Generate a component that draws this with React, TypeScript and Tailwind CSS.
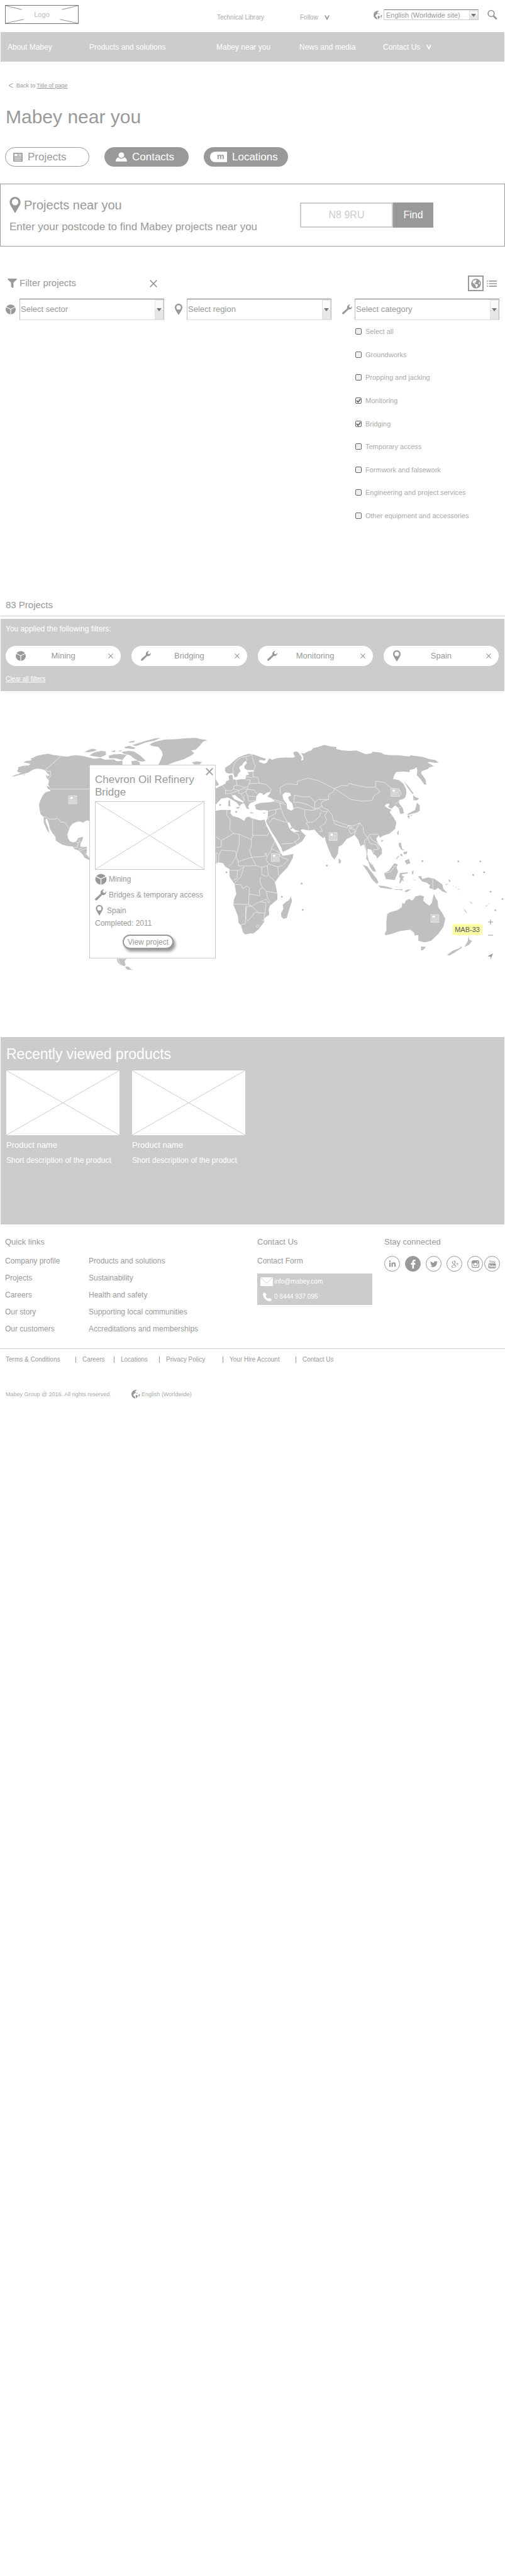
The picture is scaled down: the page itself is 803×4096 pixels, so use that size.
import React from "react";
import { FaFacebookF, FaFilter, FaGlobeAmericas, FaLinkedinIn, FaTwitter } from "react-icons/fa";
import { TiSocialGooglePlus } from "react-icons/ti";

type IconProps = { className?: string };

const Pin = ({ className }: IconProps) => (
  <svg viewBox="0 0 20 30" className={className} fill="currentColor" aria-hidden="true">
    <path fillRule="evenodd" d="M10 0C4.400 0 0 4.300 0 9.800 0 13 1.500 15.600 3.500 19L10 30l6.500-11C18.500 15.600 20 13 20 9.800 20 4.300 15.600 0 10 0Zm0 3.600a6 6 0 1 1 0 12 6 6 0 0 1 0-12Z" />
  </svg>
);

const Sector = ({ className }: IconProps) => (
  <svg viewBox="0 0 24 24" className={className} aria-hidden="true">
    <ellipse cx="12" cy="12" rx="12" ry="11.500" fill="currentColor" />
    <path d="M0 5.500 12 11.500 24 5.500M12 11.500V24" fill="none" stroke="#fff" strokeWidth="1.700" />
  </svg>
);

const Wrench = ({ className }: IconProps) => (
  <svg viewBox="0 0 22 22" className={className} aria-hidden="true">
    <path fill="currentColor" d="M.7 18 11 8.500C10 4 13 0 18 .3L15 3.500l.8 3 3.200.7L21.800 4C22.500 9 18.500 12 14 11L4 21c-1 1-2.500.8-3.300-.1C-.2 20 0 18.700.7 18Z" />
  </svg>
);

const Globe = ({ className }: IconProps) => (
  <svg viewBox="0 0 16 16" className={className} aria-hidden="true">
    <circle cx="8" cy="8" r="7.500" fill="#fff" stroke="#e4e4e4" strokeWidth=".6" />
    <path fill="#999" d="M9.500.3C4.500-.7 0 3 0 8c0 3.400 2.200 6.600 6.200 7.700l.8-1.500-1.200-2L3.500 10l.7-2.500 2.300-1.200 1.500-2L6.600 3 9.500.3ZM8 9.200l2.600.4 1.300 1.700-1.600 2.200-1.500 1.800-1.300-3.300.5-2.800ZM12.500 9l3-1.500c0 2.200-.8 4.300-2.500 5.800l.4-2.500-.9-1.800Z" />
    <path fill="#c4c4c4" d="m8.500 5.500 2-.8 1 1.200-1.600 1.100-1.900-.4.500-1.100Z" />
  </svg>
);

const Cross = ({ className }: IconProps) => (
  <svg viewBox="0 0 12 12" className={className} stroke="currentColor" aria-hidden="true">
    <path d="M.7.7 11.300 11.300M11.300.7.7 11.300" strokeWidth="1.700" fill="none" />
  </svg>
);

const Chevron = ({ className }: IconProps) => (
  <svg viewBox="0 0 8 8" className={className} stroke="currentColor" aria-hidden="true">
    <path d="M.8.5 4 6.500 7.200.5" strokeWidth="1.700" fill="none" />
  </svg>
);

const News = ({ className }: IconProps) => (
  <svg viewBox="0 0 17 16" className={className} aria-hidden="true">
    <rect width="17" height="16" rx=".8" fill="currentColor" />
    <path fill="#fff" d="M2 2h6v4H2zM9.200 2H15v1.300H9.200zM9.200 4.500H15V6H9.200zM2 7.500h13v1.200H2zM2 10.200h13v1.200H2zM2 12.900h13v1.200H2z" />
  </svg>
);

const Person = ({ className }: IconProps) => (
  <svg viewBox="0 0 22 18" className={className} fill="currentColor" aria-hidden="true">
    <circle cx="11" cy="5.500" r="5.500" />
    <path d="M0 18c0-4 1.500-7 5.200-8.500C8 13.500 14 13.500 16.800 9.500 20.500 11 22 14 22 18Z" />
  </svg>
);

const BrandMark = ({ className }: IconProps) => (
  <svg viewBox="0 0 33 20" className={className} aria-hidden="true">
    <path d="M10 0h23v20H10C3.500 20 0 15 0 10S3.500 0 10 0Z" fill="#fff" />
    <text x="20.500" y="14.500" textAnchor="middle" fill="#999" className="text-[16px] font-bold">m</text>
  </svg>
);

const Search = ({ className }: IconProps) => (
  <svg viewBox="0 0 20 20" className={className} fill="none" stroke="#999" aria-hidden="true">
    <circle cx="7.500" cy="7.500" r="6" strokeWidth="2.300" />
    <path d="m11.800 11.800 6.700 7" strokeWidth="3.400" />
  </svg>
);

const ListIcon = ({ className }: IconProps) => (
  <svg viewBox="0 0 19 12" className={className} fill="#999" aria-hidden="true">
    <path d="M0 0h2v2H0zM4 0h15v2H4zM0 5h2v2H0zM4 5h15v2H4zM0 10h2v2H0zM4 10h15v2H4z" />
  </svg>
);

const Camera = ({ className }: IconProps) => (
  <svg viewBox="0 0 14 14" className={className} aria-hidden="true">
    <rect x=".7" y=".7" width="12.600" height="12.600" rx="2" fill="none" stroke="currentColor" strokeWidth="1.400" />
    <path d="M1 1h12v4.500H1z" fill="currentColor" />
    <circle cx="7" cy="7" r="3.200" fill="#fff" stroke="currentColor" strokeWidth="1.300" />
    <path d="M10 2h2v2h-2z" fill="#fff" />
  </svg>
);

const YouTube = ({ className }: IconProps) => (
  <svg viewBox="0 0 16 18" className={className} aria-hidden="true">
    <text x="8" y="7" textAnchor="middle" fill="currentColor" className="text-[7px] font-bold">You</text>
    <rect x=".5" y="8" width="15" height="10" rx="2.500" fill="currentColor" />
    <text x="8" y="15.500" textAnchor="middle" fill="#fff" className="text-[6px] font-bold">Tube</text>
  </svg>
);

const Envelope = ({ className }: IconProps) => (
  <svg viewBox="0 0 24 17" className={className} aria-hidden="true">
    <rect width="24" height="17" rx="1.500" fill="#fff" />
    <path d="m1 1 11 10.500L23 1" fill="none" stroke="#ccc" strokeWidth="1.200" />
  </svg>
);

const Phone = ({ className }: IconProps) => (
  <svg viewBox="0 0 17 17" className={className} aria-hidden="true">
    <path d="M1 1.500 3.500 0 7 4 5 6.800c1 2.200 3 4.200 5.200 5.200L13 10.500l4 3.500c-.5 2-2 3-4 3C6 16 0 9 0 3.500Z" fill="#fff" />
  </svg>
);

const Placeholder = ({ className }: IconProps) => (
  <svg viewBox="0 0 180 103" preserveAspectRatio="none" className={className} aria-hidden="true">
    <path d="M0 0 180 103M180 0 0 103" stroke="#ccc" fill="none" vectorEffect="non-scaling-stroke" />
  </svg>
);

const SelectArrow = ({ className }: IconProps) => (
  <span className={`pointer-events-none absolute flex items-center justify-center border border-[#e0e0e0] bg-linear-to-b from-[#fafafa] from-50% to-[#e6e6e6] to-50% ${className}`}>
    <svg viewBox="0 0 8 5" className="h-[5px] w-2" aria-hidden="true">
      <path d="M0 0h8L4 5Z" fill="#777" />
    </svg>
  </span>
);

const filters = [
  { label: "Select sector", icon: <Sector className="h-4 w-[18px]" />, iconBox: "w-[23px]" },
  { label: "Select region", icon: <Pin className="h-[18px] w-3" />, iconBox: "w-[19px]" },
  { label: "Select category", icon: <Wrench className="size-4" />, iconBox: "w-5" },
];

const categories = [
  ["Select all", false],
  ["Groundworks", false],
  ["Propping and jacking", false],
  ["Monitoring", true],
  ["Bridging", true],
  ["Temporary access", false],
  ["Formwork and falsework", false],
  ["Engineering and project services", false],
  ["Other equipment and accessories", false],
] as const;

const chips = [
  { label: "Mining", icon: <Sector className="h-4 w-[18px]" /> },
  { label: "Bridging", icon: <Wrench className="size-4" /> },
  { label: "Monitoring", icon: <Wrench className="size-4" /> },
  { label: "Spain", icon: <Pin className="h-[18px] w-3" /> },
];

const americas = [
  "M65 302 L85 290 L108 284 L122 274 L110 276 L97 270 L104 258 L103 247 L125 240 L140 237 L165 235 L175 226 L158 222 L133 220 L150 210 L172 208 L182 204 L173 198 L190 190 L212 180 L240 174 L275 169 L300 175 L346 181 L385 186 L405 180 L440 177 L480 183 L510 190 L535 197 L575 193 L600 203 L650 201 L670 212 L700 208 L700 500 L512 552 L495 550 L475 562 L462 557 L445 556 L428 562 L412 570 L398 590 L392 610 L385 630 L390 655 L400 668 L415 675 L435 671 L447 650 L475 643 L472 660 L463 675 L458 698 L480 702 L495 700 L497 722 L493 742 L505 758 L512 765 L512 777 L493 768 L482 762 L474 746 L450 722 L425 713 L415 698 L390 697 L355 688 L318 665 L317 643 L300 622 L285 596 L278 565 L270 542 L260 540 L262 560 L275 590 L283 623 L268 605 L258 580 L250 562 L249 530 L232 515 L227 490 L223 460 L231 435 L245 405 L262 388 L287 382 L288 368 L275 345 L280 325 L270 300 L283 290 L265 275 L260 264 L235 256 L215 254 L198 257 L180 264 L165 275 L140 283 Z",
  "M262 290 L270 293 L275 320 L266 305Z M265 352 L282 358 L291 377 L275 370Z M125 290 L145 286 L140 291Z",
  "M482 160 L510 145 L530 140 L555 146 L540 153 L510 160Z M512 178 L530 165 L550 158 L580 152 L605 155 L605 175 L575 188 L535 183Z M620 180 L650 172 L690 170 L725 175 L710 190 L700 205 L660 195 L625 195Z M635 155 L660 148 L655 160Z M675 152 L697 148 L690 156Z M695 158 L735 152 L765 155 L800 178 L833 208 L815 214 L790 210 L765 195 L745 178 L705 168Z M735 100 L770 93 L765 104 L740 105Z M712 130 L740 124 L775 135 L765 142 L715 137Z M755 120 L800 105 L850 90 L890 80 L918 79 L880 95 L830 105 L780 125Z M750 212 L780 207 L800 220 L798 232 L755 232Z M665 232 L680 220 L697 232Z",
  "M855 115 L885 100 L940 88 L1010 85 L1070 80 L1120 78 L1150 85 L1185 90 L1160 100 L1140 125 L1118 145 L1092 150 L1110 165 L1090 180 L1050 200 L995 217 L955 232 L905 232 L920 200 L930 175 L925 155 L905 130 L870 125Z",
  "M1098 218 L1125 212 L1155 217 L1140 230 L1108 230Z",
  "M667 1340 L723 1340 L712 1355 L718 1376 L710 1383 L688 1375 L672 1360Z M715 1385 L735 1385 L748 1400 L762 1404 L730 1403 L720 1395Z",
];

const americasBorders = [
  "M349 182 L300 225 L262 258 L270 270 L288 268 L290 285 L283 308",
  "M287 371 L512 371",
  "M248 530 L268 530 L278 542 L308 542 L325 538 L338 544 L348 562 L362 558 L375 566 L392 592",
  "M422 704 L440 705 L448 680 L438 676 L458 674 L452 660 M448 716 L470 705 L478 696 M452 725 L475 715 L495 711 M485 742 L497 745",
  "M676 1340 L680 1360 L700 1378",
];

const oldWorld = [
  "M27 368 L45 360 L62 350 L82 340 L86 326 L103 318 L98 298 L110 288 L120 292 L122 315 L140 318 L165 314 L188 314 L192 293 L208 286 L200 274 L234 270 L234 262 L200 262 L183 252 L183 238 L196 222 L192 210 L180 218 L170 234 L155 244 L158 258 L163 268 L150 282 L146 298 L132 304 L123 280 L100 282 L86 277 L79 262 L81 248 L105 232 L125 212 L150 190 L185 175 L208 169 L235 174 L262 185 L297 197 L293 207 L262 204 L262 215 L285 225 L300 222 L315 195 L330 203 L360 193 L400 190 L440 191 L452 186 L442 165 L452 155 L465 157 L480 175 L488 190 L485 208 L496 204 L496 185 L484 165 L500 168 L520 155 L538 150 L548 137 L580 128 L608 118 L640 126 L672 130 L672 142 L700 149 L740 152 L778 150 L828 171 L858 166 L865 157 L910 162 L925 172 L952 177 L1000 177 L1060 185 L1065 178 L1130 187 L1170 200 L1197 204 L1216 220 L1195 221 L1170 215 L1155 218 L1190 240 L1165 247 L1158 256 L1125 268 L1122 280 L1145 315 L1150 345 L1140 345 L1120 315 L1100 292 L1102 262 L1098 245 L1085 256 L1060 262 L1063 274 L1030 270 L990 273 L980 290 L973 312 L1005 320 L1028 340 L1042 370 L1044 395 L1038 418 L1022 430 L1008 432 L1004 450 L1024 478 L1031 508 L1012 514 L1003 480 L985 463 L965 482 L947 473 L955 455 L940 454 L928 467 L945 480 L965 488 L955 503 L973 528 L991 560 L984 598 L955 625 L922 636 L905 648 L896 637 L884 653 L892 680 L914 712 L914 740 L888 768 L884 753 L867 740 L858 718 L838 712 L836 745 L845 785 L862 800 L878 828 L882 845 L864 838 L850 815 L842 785 L830 768 L833 740 L826 710 L818 688 L800 696 L788 660 L768 632 L752 643 L727 656 L702 690 L684 700 L680 740 L662 773 L648 757 L632 718 L615 668 L611 645 L600 650 L580 632 L555 603 L525 607 L490 600 L474 610 L455 605 L435 590 L422 560 L411 562 L420 590 L432 608 L448 617 L475 612 L478 597 L487 614 L509 636 L490 668 L465 686 L420 713 L386 730 L378 702 L355 660 L330 620 L310 580 L298 556 L307 530 L309 495 L290 490 L265 492 L245 487 L238 462 L265 450 L320 445 L345 440 L330 425 L305 413 L315 400 L322 388 L305 390 L284 405 L277 395 L262 392 L246 412 L244 438 L212 452 L203 470 L210 485 L195 482 L176 440 L155 424 L132 404 L116 407 L130 428 L155 440 L183 450 L165 457 L158 470 L140 445 L118 432 L95 418 L60 425 L50 437 L27 463 Z",
  "M27 308 L35 322 L47 343 L40 352 L27 350Z M100 295 L108 290 L112 310 L102 308Z M98 440 L106 430 L108 470 L98 468Z M140 475 L160 472 L152 482 L138 480Z M212 502 L235 506 L218 510Z M280 508 L298 502 L288 511Z",
  "M27 495 L60 489 L112 490 L108 508 L120 524 L155 535 L182 552 L190 534 L205 528 L228 540 L265 550 L290 545 L300 580 L325 630 L350 680 L378 738 L385 752 L410 748 L443 741 L440 765 L412 818 L372 862 L345 905 L352 935 L358 972 L358 1002 L318 1038 L312 1058 L315 1088 L290 1108 L288 1130 L258 1172 L230 1197 L212 1196 L188 1202 L176 1190 L165 1150 L152 1135 L148 1095 L124 1030 L128 1000 L140 970 L130 912 L105 875 L104 850 L103 826 L82 815 L68 793 L45 790 L27 800 Z",
  "M430 985 L436 1010 L420 1062 L408 1108 L390 1112 L379 1100 L378 1078 L390 1055 L387 1030 L405 1015 L420 1005Z",
  "M942 1085 L955 1075 L998 1062 L1020 1045 L1022 1022 L1035 1025 L1040 1008 L1060 998 L1072 1008 L1085 998 L1090 985 L1118 977 L1138 984 L1133 1008 L1150 1025 L1166 1037 L1180 1020 L1185 990 L1191 970 L1199 992 L1210 1010 L1213 1045 L1235 1080 L1251 1112 L1240 1160 L1212 1200 L1175 1238 L1140 1247 L1108 1238 L1107 1205 L1088 1207 L1084 1190 L1065 1174 L1010 1182 L960 1200 L935 1206 L928 1200 L938 1175 L937 1130Z",
  "M1122 1270 L1148 1272 L1135 1288 L1122 1293Z M1375 1210 L1378 1230 L1393 1240 L1375 1262 L1352 1273 L1362 1255 L1370 1240Z M1260 1318 L1290 1295 L1325 1280 L1338 1268 L1338 1278 L1300 1305 L1272 1322Z",
  "M812 803 L835 812 L862 850 L885 880 L896 905 L885 912 L860 885 L842 850Z M895 922 L930 925 L970 938 L965 942 L905 934Z M980 942 L1010 944 L1025 942 L1020 950 L1008 947 L985 947Z M1032 955 L1050 945 L1068 943 L1045 960Z",
  "M925 850 L950 838 L980 795 L998 800 L992 820 L1000 842 L982 890 L935 885Z M1010 850 L1052 846 L1050 853 L1020 858 L1022 868 L1034 870 L1025 880 L1032 900 L1020 890 L1012 910 L1006 905 L1012 880 L1005 872Z M1074 840 L1083 835 L1080 857 L1074 857Z M1080 888 L1095 890 L1088 893Z",
  "M1105 870 L1122 867 L1128 885 L1160 875 L1195 885 L1235 915 L1240 940 L1262 967 L1235 955 L1212 935 L1195 948 L1165 935 L1170 920 L1150 905 L1128 898Z M1250 915 L1270 910 L1280 895 L1265 885 L1275 905 L1255 920Z",
  "M1003 680 L1015 676 L1020 710 L1035 720 L1018 718 L1005 700Z M1010 745 L1020 740 L1025 755 L1012 750Z M1035 780 L1058 770 L1065 795 L1045 800Z M988 770 L1003 750 L1005 755 L992 772Z M1028 730 L1050 728 L1045 740 L1032 745Z",
  "M995 618 L1003 606 L1003 630 L996 632Z M910 662 L922 662 L912 675Z M684 765 L697 780 L693 795 L684 795Z",
  "M1030 325 L1055 355 L1082 395 L1075 398 L1055 368Z M1080 405 L1090 415 L1112 425 L1100 435 L1082 435Z M1100 447 L1115 465 L1115 495 L1100 505 L1068 514 L1050 520 L1052 512 L1090 490Z M1048 523 L1062 522 L1058 542Z M1066 520 L1076 518 L1070 526Z",
  "M1347 1050 L1370 1082 L1355 1070Z M1382 1008 L1388 1020 L1384 1022Z M1390 1015 L1394 1025 L1388 1025Z M1464 1035 L1476 1036 L1468 1042Z M1474 1027 L1488 1024 L1482 1028Z M1290 918 L1297 926 L1292 924Z M1303 926 L1312 935 L1306 932Z M1315 938 L1330 945 L1322 945Z M1325 950 L1342 966 L1332 958Z",
];

const seas = [
  "M385 402 L400 390 L425 392 L432 408 L415 415 L420 435 L437 452 L445 485 L432 494 L410 482 L408 455 L390 428Z",
];

const oldWorldBorders = [
  "M124 290 L122 250 L135 215 L165 190 L190 185 L196 208 M188 184 L205 182 L222 172 L232 215 L241 240 L234 258 M228 270 L230 300 L255 305 L262 336 L300 345 L325 372 L318 390",
  "M190 300 L222 305 L230 300 M208 340 L215 318 L190 318 M208 340 L262 336 M140 318 L143 348 L180 360 L200 358 L208 340 M125 355 L143 348 M125 355 L128 370 L155 378 L175 368 L200 372 L202 358 M64 350 L75 360 L83 370 L82 395 M83 378 L110 380 L128 370 M78 398 L110 395 L155 378 M110 395 L120 408 M155 378 L150 392 L165 398 L190 385 L200 372 M165 398 L175 420 L185 432 M190 385 L200 410 L242 414 M200 372 L235 376 L250 398 M200 410 L205 440 M182 405 L178 440 M205 440 L240 436",
  "M375 400 L372 362 L405 340 L465 345 L465 325 L520 308 L575 322 L660 368 L700 350 L730 352 L740 338 L790 352 L830 360 L880 360 L905 385 L870 410 L862 435 L810 440 L750 430 L715 405 L662 368",
  "M880 360 L880 325 L925 332 L965 366 L1012 378 L1015 400 L1005 415 M985 458 L1010 432 M1002 478 L1022 474",
  "M662 368 L655 388 L630 402 L632 430 L600 440 L590 455 L598 475 L628 490 L650 520 L655 548 L732 578 L765 580 L795 564 L815 590 L815 615 L838 650 L848 630 L885 628 L898 638",
  "M447 450 L448 405 L495 415 L532 415 L558 445 L575 430 L632 430 M452 445 L480 448 L520 460 L555 482 L558 445 M555 482 L580 478 L600 465 M440 480 L470 475 L505 488 L545 492 L580 482 L600 498 L625 500 M505 488 L503 520 L520 560 L512 565 L525 588 L522 604 M520 560 L550 558 L580 530 L590 500 M625 500 L610 520 L620 545 L608 570 L585 585 L598 610 L580 615",
  "M655 548 L665 572 L730 592 L733 575 M735 580 L758 590 L745 595Z M735 600 L750 628 L770 615 L768 600 L738 597 M795 564 L778 600 L768 635 M838 650 L820 665 L832 735 M838 650 L850 680 L885 690 L895 715 L872 715 L865 738 M850 640 L860 660 L890 680 L900 712",
  "M345 440 L370 450 L378 482 L312 495 M370 450 L405 462 M340 430 L395 450 M350 490 L350 510 L312 530 L308 545 M340 538 L400 560 L412 555 M378 482 L390 520 L412 560 M312 565 L330 540 L345 536 M378 685 L440 680 L475 655 L470 630 L440 615 M452 668 L460 688",
  "M90 490 L90 520 L108 545 L105 600 L125 625 L60 665 L27 640 M125 625 L155 628 L220 660 L220 655 L227 640 L227 542 M227 635 L305 635 L315 615 M220 660 L220 700 L210 720 L222 760 L150 785 L138 750 L155 690 L155 628 M60 665 L60 700 L27 705 M27 730 L50 745 L60 720 L135 725 L142 750 L115 800 L100 808 M33 740 L35 798 M47 745 L46 792 M222 760 L290 755 L297 735 L302 760 L330 712 L378 738 M325 712 L345 670 M302 760 L298 775 L315 800 L360 815 L385 808 L418 775 L375 758 L370 740",
  "M150 785 L152 810 L210 810 L245 808 L275 818 L305 808 L315 800 M222 760 L245 808 M275 818 L275 860 L300 870 L310 862 L305 808 M103 835 L155 835 L180 815 M180 815 L165 870 L130 908 M145 835 L145 880 L125 890 M130 915 L165 918 L175 940 L195 925 L210 935 L208 970 L265 980 L262 945 L280 935 L265 900 L270 870 M310 862 L348 900 M360 815 L365 865 M280 935 L300 955 L355 965 M300 955 L305 990 L318 1015 L310 1020 L298 1000 L265 1015 L298 1020 L292 1080 L240 1075 L200 1125 L190 1105 L195 1040 L222 1040 L262 1015 M208 970 L205 1030 L222 1040 M125 1027 L205 1030 M190 1040 L188 1140 L165 1145 M222 1040 L262 1080 M292 1080 L285 1125 L275 1118 M244 1155 L252 1145 L262 1152 L252 1163Z",
  "M1184 885 L1184 948 M927 850 L960 845 L980 812 L995 812 M850 795 L862 802",
];

const islands: [number, number][] = [
  [621, 808], [487, 910], [382, 986], [493, 1061], [88, 846], [139, 501], [54, 461], [1129, 782], [1320, 784], [1437, 784],
  [1457, 846], [1399, 861], [1492, 957], [1555, 999], [1517, 1063], [432, 595],
];

const markers: [number, number][] = [[138.500, 1524], [524.500, 1634], [634.500, 1594], [752.500, 1510], [828.500, 1750]];

function WorldMap() {
  return (
    <svg viewBox="0 1317 962 659" className="block w-full" role="img" aria-label="World map of projects">
      <g transform="translate(0 1380) scale(.3333)">
        <g fill="#c0c0c0">{americas.map((d) => <path key={d} d={d} />)}</g>
        <g fill="none" stroke="#eee" strokeWidth="3">{americasBorders.map((d) => <path key={d} d={d} />)}</g>
      </g>
      <g transform="translate(400 1380) scale(.3584 .3333)">
        <g fill="#c0c0c0">{oldWorld.map((d) => <path key={d} d={d} />)}</g>
        <g fill="#fff">{seas.map((d) => <path key={d} d={d} />)}</g>
        <g fill="none" stroke="#eee" strokeWidth="2.800" strokeLinejoin="round">{oldWorldBorders.map((d) => <path key={d} d={d} />)}</g>
        <g fill="#b8b8b8">{islands.map(([x, y]) => <circle key={`${x}-${y}`} cx={x} cy={y} r="5" />)}</g>
      </g>
      {markers.map(([x, y]) => (
        <g key={`${x}-${y}`} transform={`translate(${x - 8} ${y - 8})`}>
          <rect x=".5" y=".5" width="15" height="15" fill="#c8c8c8" stroke="#ededed" />
          <path fill="#fff" d="M3 2.500h5v4H3z" />
          <path stroke="#eee" d="M9 3h5M9 6h5M2 8.500h12M2 11h12M2 13.500h12" />
        </g>
      ))}
    </svg>
  );
}

const quickLinks = [
  ["Company profile", "Products and solutions"],
  ["Projects", "Sustainability"],
  ["Careers", "Health and safety"],
  ["Our story", "Supporting local communities"],
  ["Our customers", "Accreditations and memberships"],
];

const legalLinks = [
  { label: "Terms & Conditions", width: "w-[111px]" },
  { label: "Careers", width: "w-[50px]" },
  { label: "Locations", width: "w-[61px]" },
  { label: "Privacy Policy", width: "w-[90px]" },
  { label: "Your Hire Account", width: "w-[105px]" },
  { label: "Contact Us", width: "" },
];

const circle = "flex size-[25px] items-center justify-center rounded-full border border-[#999]";

export default function App() {
  return (
    <div className="min-h-screen bg-white font-['Liberation_Sans',Arial,sans-serif] text-[#999]">
      <header>
        <div className="flex h-[51px] items-start">
          <a href="#" className="relative mt-2 ml-2 flex h-[30px] w-[117px] items-center justify-center border border-[#777] text-[11px] text-[#bbb]">
            <svg viewBox="0 0 140 36" preserveAspectRatio="none" className="absolute inset-0 size-full" aria-hidden="true">
              <path d="M0 0 31 8M140 0 109 8M0 36 35 28M140 36 105 28" stroke="#777" fill="none" />
            </svg>
            Logo
          </a>
          <nav aria-label="Utility" className="mt-[22px] ml-auto flex text-[10px] leading-3 text-[#aaa]">
            <a href="#" className="w-[132px]">Technical Library</a>
            <button type="button" className="flex w-[117px] items-center gap-[10px]">
              Follow <Chevron className="size-2 text-[#999]" />
            </button>
          </nav>
          <div className="mt-[15px] mr-3 flex items-center">
            <Globe className="size-[14px]" />
            <div className="relative ml-[2px] w-[151px]">
              <select aria-label="Language" className="block h-[17px] w-full appearance-none border border-[#ccc] border-t-[#777] bg-white pl-[3px] text-[11px] leading-[14px] text-[#999]">
                <option>English (Worldwide site)</option>
              </select>
              <SelectArrow className="top-[2px] right-px h-[14px] w-[14px]" />
            </div>
            <button type="button" aria-label="Search" className="ml-[14px]"><Search className="h-[17px] w-4" /></button>
          </div>
        </div>
        <nav aria-label="Main" className="mx-px grid h-[47px] grid-cols-[130fr_202fr_132fr_133fr_193fr] items-center bg-[#ccc] pl-[11px] text-xs text-white">
          <a href="#">About Mabey</a>
          <a href="#">Products and solutions</a>
          <a href="#">Mabey near you</a>
          <a href="#">News and media</a>
          <a href="#" className="flex items-center gap-[10px]">Contact Us <Chevron className="size-2" /></a>
        </nav>
      </header>

      <main>
        <div className="px-2">
          <p className="mt-8 flex items-center gap-[5px] pl-[5px] text-[9px] leading-3">
            <svg viewBox="0 0 8 8" className="size-2" aria-hidden="true"><path d="M7.500.7 1 4l6.500 3.300" fill="none" stroke="#999" /></svg>
            <span>Back to <a href="#" className="underline">Title of page</a></span>
          </p>
          <h1 className="mt-[26px] pl-px text-[30px] leading-9">Mabey near you</h1>
          <div className="mt-[30px] flex gap-6 text-[17px]">
            <button type="button" className="flex h-[31px] w-[134px] items-center gap-2 rounded-full border border-[#999] pl-3">
              <News className="h-[14px] w-[15px]" /> Projects
            </button>
            <button type="button" className="flex h-[31px] w-[134px] items-center gap-2 rounded-full bg-[#999] pl-[18px] text-white">
              <Person className="h-[15px] w-[18px]" /> Contacts
            </button>
            <button type="button" className="flex h-[31px] w-[134px] items-center gap-2 rounded-full bg-[#999] pl-[10px] text-white">
              <BrandMark className="h-[17px] w-[27px]" /> Locations
            </button>
          </div>
        </div>

        <section className="mt-[27px] flex h-[100px] items-center border border-[#999] pl-[14px]">
          <div className="w-[462px] shrink-0">
            <h2 className="flex items-center gap-[5px] text-xl leading-[30px]">
              <Pin className="h-[26px] w-[18px]" /> Projects near you
            </h2>
            <label htmlFor="postcode" className="mt-2 block text-[17px] leading-6">Enter your postcode to find Mabey projects near you</label>
          </div>
          <form className="flex h-10 text-base">
            <input id="postcode" placeholder="N8 9RU" className="w-[148px] border-2 border-[#ccc] text-center placeholder:text-[#ccc]" />
            <button type="button" className="w-16 bg-[#999] text-white">Find</button>
          </form>
        </section>

        <section className="px-2">
          <div className="mt-[46px] flex h-[25px] items-center pl-1">
            <FaFilter className="size-[15px]" />
            <h2 className="ml-1 text-[15px]">Filter projects</h2>
            <button type="button" aria-label="Close filters" className="ml-[117px]"><Cross className="size-3" /></button>
            <button type="button" aria-label="Map view" className="ml-auto flex size-[25px] items-center justify-center border-2 border-[#999]">
              <FaGlobeAmericas className="size-4" />
            </button>
            <button type="button" aria-label="List view" className="mr-[5px] ml-[5px]"><ListIcon className="h-[10px] w-4" /></button>
          </div>
          <div className="mt-3 flex justify-between pr-px">
            {filters.map((f) => (
              <div key={f.label} className="flex items-center">
                <span className={f.iconBox}>{f.icon}</span>
                <div className="relative w-[230px]">
                  <select aria-label={f.label} className="block h-[34px] w-full appearance-none border border-[#bbb] border-t-[#777] border-b-[#ddd] bg-white pl-px text-[13px] text-[#999]">
                    <option>{f.label}</option>
                  </select>
                  <SelectArrow className="top-[2px] right-px bottom-px w-[14px]" />
                </div>
              </div>
            ))}
          </div>
          <ul className="mt-[13px] ml-auto flex h-[303px] w-[230px] flex-col justify-between text-[11px] leading-[10px] text-[#aaa]">
            {categories.map(([label, checked]) => (
              <li key={label}>
                <label className="flex items-center gap-[6px]">
                  <span className="relative flex">
                    <input type="checkbox" defaultChecked={checked} className="peer size-[10px] appearance-none rounded-[2px] border border-[#666] bg-[#f2f2f2]" />
                    <svg viewBox="0 0 10 10" className="pointer-events-none absolute inset-0 hidden size-[10px] peer-checked:block" aria-hidden="true">
                      <path d="m2 4.800 2.300 2.700L8.300 2.500" fill="none" stroke="#555" strokeWidth="1.500" />
                    </svg>
                  </span>
                  {label}
                </label>
              </li>
            ))}
          </ul>
        </section>

        <section>
          <h2 className="mt-[127px] ml-px border-b border-[#ccc] pb-[7px] pl-2 text-[15px] leading-5">83 Projects</h2>
          <div className="mx-px mt-1 h-[115px] bg-[#ccc] px-2 pt-2 text-white">
            <p className="text-xs leading-4">You applied the following filters:</p>
            <div className="mt-[19px] grid grid-cols-4 gap-[17px] pr-px text-[13px] text-[#999]">
              {chips.map((c) => (
                <div key={c.label} className="grid h-8 grid-cols-[32px_1fr_32px] items-center rounded-full bg-white">
                  <span className="pl-[15px]">{c.icon}</span>
                  <span className="text-center">{c.label}</span>
                  <button type="button" aria-label={`Remove ${c.label}`} className="pl-3">
                    <Cross className="size-2" />
                  </button>
                </div>
              ))}
            </div>
            <a href="#" className="mt-[15px] inline-block text-[10px] leading-3 underline">Clear all filters</a>
          </div>
        </section>

        <section className="relative">
          <WorldMap />
          <article className="absolute top-[117px] left-[142px] h-[308px] w-[201px] border border-[#ccc] bg-white px-2 text-xs leading-4">
            <button type="button" aria-label="Close" className="absolute top-1 right-[3px]"><Cross className="size-3" /></button>
            <h3 className="mt-[13px] mb-1 text-[17px] leading-5">Chevron Oil Refinery Bridge</h3>
            <Placeholder className="h-[109px] w-[174px] border border-[#ccc]" />
            <ul className="mt-[6px] flex flex-col gap-[7px] whitespace-nowrap">
              <li className="flex items-center gap-[3px]"><Sector className="h-[18px] w-[19px]" /> Mining</li>
              <li className="flex items-center gap-1"><Wrench className="size-[18px]" /> Bridges &amp; temporary access</li>
              <li className="flex items-center gap-[6px] pl-px"><Pin className="h-[17px] w-3" /> Spain</li>
            </ul>
            <p className="mt-1">Completed: 2011</p>
            <button type="button" className="mt-[10px] ml-11 block h-[23px] w-[81px] rounded-full border-2 border-[#999] bg-white shadow-[3px_4px_4px_#999]">View project</button>
          </article>
          <span className="absolute top-[370px] left-[719px] flex h-[18px] w-12 items-center justify-center rounded-[3px] bg-[#ffffa8] text-[11px] text-[#555]">MAB-33</span>
          <div className="absolute top-[362px] left-[775px] flex flex-col">
            <button type="button" aria-label="Zoom in"><svg viewBox="0 0 10 10" className="size-[10px]"><path d="M1 5h8M5 1v8" stroke="#999" /></svg></button>
            <button type="button" aria-label="Zoom out" className="mt-[11px]"><svg viewBox="0 0 10 10" className="size-[10px]"><path d="M1 5h8" stroke="#999" /></svg></button>
            <button type="button" aria-label="My location" className="mt-6"><svg viewBox="0 0 10 10" className="size-[9px]"><path d="M10 0 5.800 10 5.500 5.500 0 5Z" fill="#999" /></svg></button>
          </div>
        </section>

        <section className="mx-px h-[298px] bg-[#ccc] px-[9px] pt-[13px] text-white">
          <h2 className="text-[23px] leading-7">Recently viewed products</h2>
          <div className="mt-3 flex gap-5">
            {[1, 2].map((n) => (
              <article key={n} className="w-[180px]">
                <Placeholder className="h-[103px] w-full bg-white" />
                <h3 className="mt-2 text-[13px] leading-4">Product name</h3>
                <p className="mt-2 text-xs leading-4">Short description of the product</p>
              </article>
            ))}
          </div>
        </section>
      </main>

      <footer>
        <div className="grid h-[197px] grid-cols-[401fr_202fr_192fr] pt-5 pl-2">
          <div>
            <h2 className="text-[13px] leading-4">Quick links</h2>
            <ul className="mt-[14px] flex flex-col gap-[11px] text-xs leading-4">
              {quickLinks.map(([a, b]) => (
                <li key={a} className="grid grid-cols-[133px_1fr]"><a href="#">{a}</a><a href="#">{b}</a></li>
              ))}
            </ul>
          </div>
          <div>
            <h2 className="text-[13px] leading-4">Contact Us</h2>
            <a href="#" className="mt-[14px] block text-xs leading-4">Contact Form</a>
            <div className="mt-3 flex h-[50px] w-[183px] flex-col justify-between bg-[#ccc] py-[5px] text-[10px] leading-4 text-white">
              <a href="#" className="flex items-center"><span className="flex w-[27px] pl-[5px]"><Envelope className="h-[14px] w-5" /></span>info@mabey.com</a>
              <a href="#" className="flex items-center"><span className="flex w-[27px] pl-[9px]"><Phone className="size-[14px]" /></span>0 8444 937 095</a>
            </div>
          </div>
          <div>
            <h2 className="text-[13px] leading-4">Stay connected</h2>
            <div className="mt-[14px] flex gap-2">
              <a href="#" aria-label="LinkedIn" className={circle}><FaLinkedinIn className="size-3" /></a>
              <a href="#" aria-label="Facebook" className={`${circle} bg-[#999] text-white`}><FaFacebookF className="size-[14px]" /></a>
              <a href="#" aria-label="Twitter" className={circle}><FaTwitter className="size-3" /></a>
              <a href="#" aria-label="Google Plus" className={circle}><TiSocialGooglePlus className="size-[18px]" /></a>
              <div className="flex gap-[2px]">
                <a href="#" aria-label="Instagram" className={circle}><Camera className="size-3" /></a>
                <a href="#" aria-label="YouTube" className={circle}><YouTube className="h-[15px] w-[13px]" /></a>
              </div>
            </div>
          </div>
        </div>
        <nav aria-label="Legal" className="flex border-t border-[#ccc] pt-[11px] pl-[9px] text-[10px] leading-3">
          {legalLinks.map((l, i) => (
            <span key={l.label} className="flex items-center">
              {i > 0 && <span className="mr-[10px] h-[10px] w-px bg-[#999]" />}
              <a href="#" className={l.width}>{l.label}</a>
            </span>
          ))}
        </nav>
        <div className="mt-[42px] flex items-center pl-[9px] text-[9px] leading-3 text-[#aaa]">
          <p className="w-[200px]">Mabey Group @ 2016. All rights reserved.</p>
          <Globe className="size-[14px]" />
          <span className="ml-[2px]">English (Worldwide)</span>
        </div>
      </footer>
    </div>
  );
}
